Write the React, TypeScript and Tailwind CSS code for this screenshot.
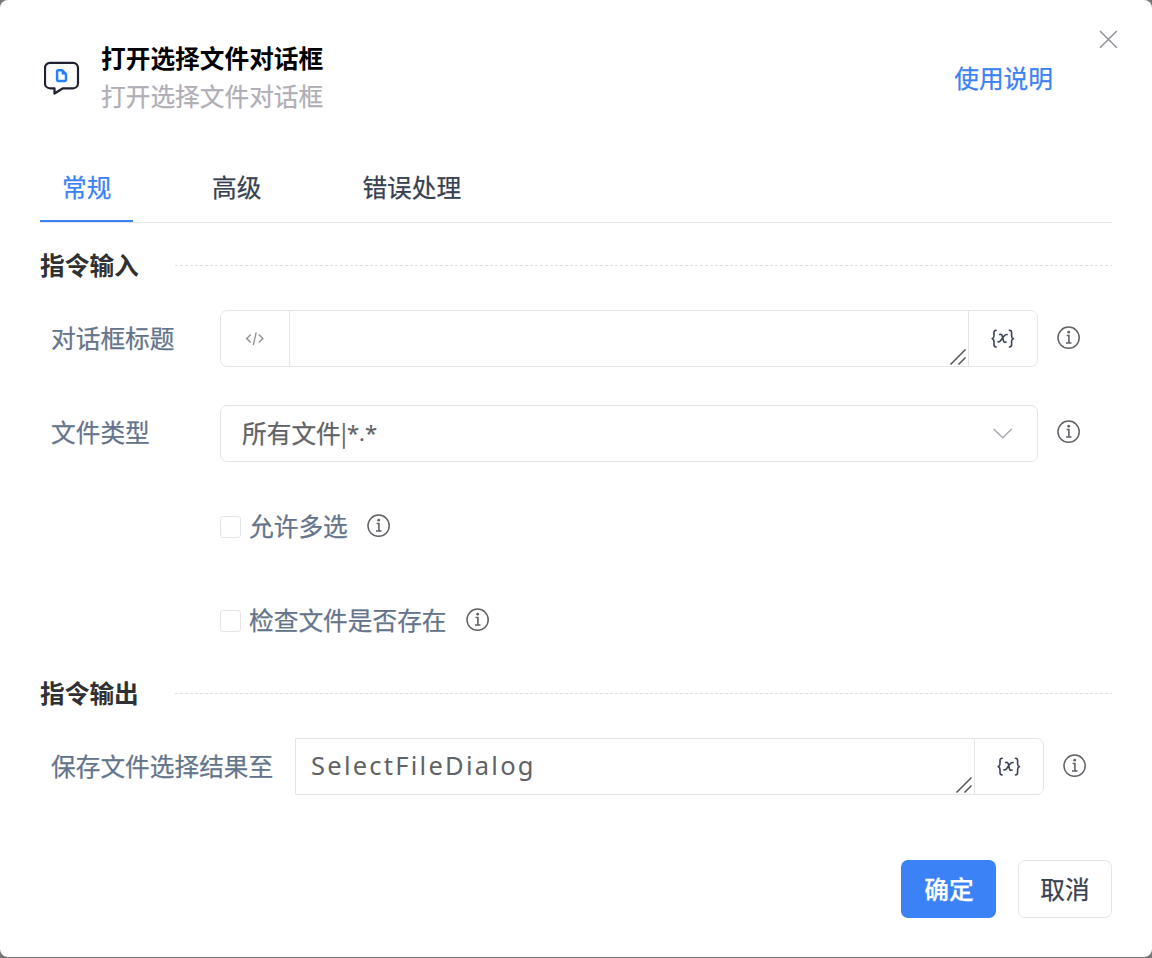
import React from "react";

function InfoIcon({ className = "" }: { className?: string }) {
  return (
    <svg className={`block h-6 w-6 shrink-0 ${className}`} viewBox="0 0 24 24" fill="none" stroke="#606266">
      <circle cx="11.600" cy="11.700" r="10.600" strokeWidth="1.5" />
      <path d="M9.600 9.500h2.300v7.400M9 17h5.500" strokeWidth="1.6" />
      <circle cx="11.700" cy="6.200" r="1.400" fill="#606266" stroke="none" />
    </svg>
  );
}

function VariableIcon() {
  return (
    <svg
      className="block h-5 w-6"
      viewBox="0 0 24 20"
      fill="none"
      stroke="#3a4556"
      strokeWidth="1.6"
      strokeLinecap="round"
      strokeLinejoin="round"
    >
      <path d="M5.200 1.200C3.400 1.200 3 1.900 3 3.600v3.200c0 1.600-.5 2.500-1.800 2.800 1.300.3 1.800 1.200 1.800 2.800v3.200c0 1.700.4 2.400 2.200 2.400" />
      <path d="M18.400 1.200c1.800 0 2.200.7 2.200 2.400v3.200c0 1.600.5 2.500 1.800 2.800-1.300.3-1.800 1.200-1.800 2.800v3.200c0 1.700-.4 2.400-2.200 2.400" />
      <path d="M8.700 5.500c1.700-.5 2.300.3 2.700 2l1 4c.4 1.700 1 2.200 2.600 1.600M16.100 5.600c-1.500-.5-2.500.5-3.700 2.100l-2.300 3.300c-1 1.500-1.700 2.300-3.100 1.800" />
    </svg>
  );
}

function ResizeGrip() {
  return (
    <svg className="mr-[2px] mb-[1px] block h-4 w-4 shrink-0 self-end" viewBox="0 0 16 16" stroke="#555" strokeWidth="1.5">
      <path d="M0.500 15.500L15.500 0.500M8.500 15.500L15.500 8.500" />
    </svg>
  );
}

function VariableCell() {
  return (
    <div className="flex w-[69px] shrink-0 items-center justify-center border-l border-[#e4e5e9]">
      <VariableIcon />
    </div>
  );
}

function SectionTitle({ children }: { children: React.ReactNode }) {
  return (
    <div className="flex h-[57px] items-center">
      <h2 className="w-[135px] shrink-0 font-bold text-[#303133] [-webkit-text-stroke:0px]">{children}</h2>
      <svg className="block h-px min-w-0 flex-1" aria-hidden="true">
        <line x1="0" y1="0.5" x2="937" y2="0.5" stroke="#dcdfe6" strokeDasharray="3 2" />
      </svg>
    </div>
  );
}

function CheckRow({ label }: { label: string }) {
  return (
    <div className="flex h-[57px] items-center pl-[180px] text-[#64748b]">
      <span className="h-[22px] w-[21px] shrink-0 rounded-[3px] border border-[#e4e5e9]" />
      <span className="ml-2">{label}</span>
      <InfoIcon className="relative -top-px ml-[19px]" />
    </div>
  );
}

export default function App() {
  return (
    <div className="h-[958px] w-full overflow-hidden bg-[#777] font-['Noto_Sans','Noto_Sans_CJK_SC',sans-serif] text-[24.7px] leading-[36px] [-webkit-text-stroke:0.25px]">
      <div className="relative flex h-[957px] flex-col rounded-[8px] bg-white px-10">
        <button className="absolute top-[29px] right-[34px] h-5 w-5" aria-label="关闭">
          <svg className="block h-5 w-5" viewBox="0 0 20 20" stroke="#909399" strokeWidth="1.5">
            <path d="M2 2L18.800 18.800M18.800 2L2 18.800" />
          </svg>
        </button>

        <header className="flex h-[153px] shrink-0 items-start pt-[40px]">
          <svg className="mt-5 ml-1 block h-9 w-9 shrink-0" viewBox="0 0 36 36" fill="none" strokeLinejoin="round">
            <path
              d="M6 2.800h23a5 5 0 0 1 5 5v15.500a5 5 0 0 1-5 5H19L10.500 33.500V28.300H6a5 5 0 0 1-5-5V7.800a5 5 0 0 1 5-5Z"
              stroke="#1f2032"
              strokeWidth="2.2"
            />
            <path
              d="M14.300 10.200h3.700l4 4v5.600a1.200 1.200 0 0 1-1.200 1.200h-6.500a1.200 1.200 0 0 1-1.200-1.200v-8.400a1.200 1.200 0 0 1 1.200-1.200Z"
              stroke="#2680ff"
              strokeWidth="2.500"
            />
            <path d="M17.600 10.200v4.300h4.400Z" fill="#2680ff" />
          </svg>
          <div className="ml-[21px] flex-1">
            <h1 className="h-[38px] leading-[38px] font-bold text-black [-webkit-text-stroke:0px]">打开选择文件对话框</h1>
            <p className="h-[38px] leading-[38px] text-[#b0aeb5]">打开选择文件对话框</p>
          </div>
          <a className="mt-[21px] mr-[59px] text-[#3b82f6]">使用说明</a>
        </header>

        <nav className="flex h-[70px] shrink-0 border-b border-[#e2e4e8] text-[#374151]">
          <div className="w-[93px] border-b-2 border-[#3b82f6] pt-[17px] pl-[22px] text-[#3b82f6]">常规</div>
          <div className="ml-[79px] pt-[17px]">高级</div>
          <div className="ml-[101px] pt-[17px]">错误处理</div>
        </nav>

        <div className="mt-[14px]">
          <SectionTitle>指令输入</SectionTitle>
        </div>

        <div className="mt-[16px] flex h-[57px] items-center">
          <span className="w-[180px] pl-[11px] text-[#64748b]">对话框标题</span>
          <div className="flex h-[57px] w-[818px] rounded-[7px] border border-[#e4e5e9]">
            <div className="flex w-[69px] items-center justify-center border-r border-[#e4e5e9]">
              <svg className="block h-[14px] w-[18px]" viewBox="0 0 18 14" fill="none" stroke="#909399" strokeWidth="1.4">
                <path d="M4.800 2.600L0.700 6.600l4.100 4M12.800 2.600l4.100 4-4.100 4M10.200 0.300L7.300 13.200" />
              </svg>
            </div>
            <div className="flex flex-1 justify-end">
              <ResizeGrip />
            </div>
            <VariableCell />
          </div>
          <InfoIcon className="relative -top-px ml-[19px]" />
        </div>

        <div className="mt-[38px] flex h-[57px] items-center">
          <span className="w-[180px] pb-[2px] pl-[11px] text-[#64748b]">文件类型</span>
          <div className="flex h-[57px] w-[818px] items-center justify-between rounded-[7px] border border-[#e4e5e9] pr-[24px] pl-[21px] text-[#606266]">
            <div className="flex items-center">
              <span>所有文件</span>
              <span className="pb-[4px] font-['Noto_Sans_CJK_SC',sans-serif] text-[23px]">|</span>
              <span className="pb-[4px] font-['Open_Sans',sans-serif] text-[22px]">*.*</span>
            </div>
            <svg className="block h-[11px] w-5" viewBox="0 0 20 11" fill="none" stroke="#a8abb2" strokeWidth="1.5">
              <path d="M0.700 1l9 8.800L18.700 1" />
            </svg>
          </div>
          <InfoIcon className="mb-[4px] ml-[19px]" />
        </div>

        <div className="mt-[36px]">
          <CheckRow label="允许多选" />
        </div>
        <div className="mt-[37px]">
          <CheckRow label="检查文件是否存在" />
        </div>

        <div className="mt-[16px]">
          <SectionTitle>指令输出</SectionTitle>
        </div>

        <div className="mt-[16px] flex h-[57px] items-center">
          <span className="w-[255px] pl-[11px] text-[#64748b]">保存文件选择结果至</span>
          <div className="flex h-[57px] w-[749px] rounded-r-[7px] border border-[#e4e5e9]">
            <div className="flex flex-1 justify-between">
              <span className="pt-[8px] pl-[15px] text-[25.5px] tracking-[2.250px] text-[#606266] [-webkit-text-stroke:0px]">SelectFileDialog</span>
              <ResizeGrip />
            </div>
            <VariableCell />
          </div>
          <InfoIcon className="relative -top-px ml-[19px]" />
        </div>

        <footer className="mt-[65px] flex justify-end gap-[22px]">
          <button className="h-[58px] w-[95px] rounded-[7px] bg-[#3b82f6] pt-px pl-px font-medium text-white">确定</button>
          <button className="h-[58px] w-[94px] rounded-[7px] border border-[#e4e5e9] pt-px text-[#374151]">取消</button>
        </footer>
      </div>
    </div>
  );
}
